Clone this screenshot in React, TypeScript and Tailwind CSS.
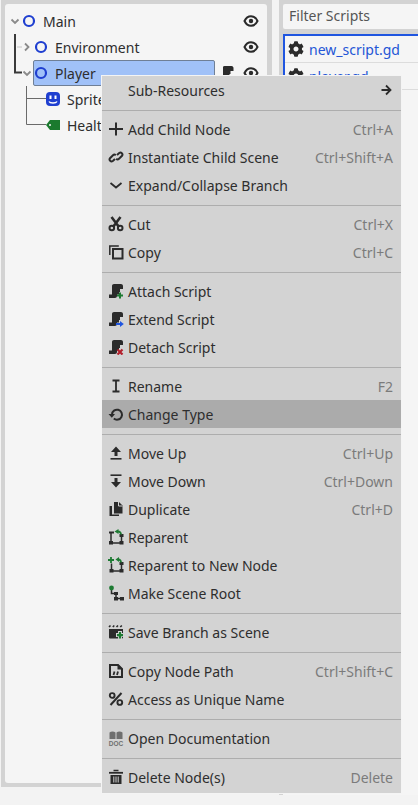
import React from 'react';
import { FaCog } from 'react-icons/fa';

// ── Godot editor icons, drawn on their 16x16 grid ─────────────────────────────
const INK = '#2b2b2b';

const Svg: React.FC<{ children: React.ReactNode; className?: string }> = ({ children, className }) => (
  <svg viewBox="0 0 16 16" className={className ?? 'w-4 h-4 shrink-0'} fill="none">{children}</svg>
);

const Script = ({ fill = INK }: { fill?: string }) => (
  <path
    fill={fill}
    d="M6 1h7c1 0 2 .8 2 2v3h-3v3h-1v2.500H9v1.500c0 1-1 2-2 2H1v-3.500h3V3c0-1.100.9-2 2-2z"
  />
);

const NodeRing = () => (
  <svg viewBox="0 0 16 16" className="w-4 h-4 shrink-0" fill="none">
    <circle cx="8" cy="8" r="5" stroke="#1f3fd0" strokeWidth="2.200" />
  </svg>
);

const Eye = () => (
  <svg viewBox="0 0 16 16" className="w-4 h-4 shrink-0" fill="none">
    <path d="M1.500 8C3 4.800 5 3.200 8 3.200S13 4.800 14.500 8C13 11.200 11 12.800 8 12.800S3 11.200 1.500 8z" stroke={INK} strokeWidth="2" />
    <circle cx="8" cy="8" r="2.200" fill={INK} />
  </svg>
);

const Chevron = ({ right, color = '#8a8a8a' }: { right?: boolean; color?: string }) => (
  <svg viewBox="0 0 12 12" className="w-3 h-3 shrink-0" fill="none">
    <path d={right ? 'M4 2.500 7.500 6 4 9.500' : 'M2.500 4.500 6 8 9.500 4.500'} stroke={color} strokeWidth="1.800" />
  </svg>
);

const icons: Record<string, React.ReactNode> = {
  plus: <Svg><path d="M8 1.500v13M1 8h14" stroke={INK} strokeWidth="2" /></Svg>,
  link: (
    <Svg>
      <g stroke={INK} strokeWidth="2">
        <path d="M7 10 4.800 12a2 2 0 0 1-2.800-2.800L5 6.200a2 2 0 0 1 2.800 0" />
        <path d="M9 6l2.200-2A2 2 0 0 1 14 6.800L11 9.800a2 2 0 0 1-2.800 0" />
      </g>
    </Svg>
  ),
  chevron: <Svg><path d="M2.500 6 8 10.500 13.500 6" stroke={INK} strokeWidth="1.800" /></Svg>,
  cut: (
    <Svg>
      <path d="M3.500 1 11 11M12.500 1 5 11" stroke={INK} strokeWidth="2.600" />
      <circle cx="3.800" cy="12" r="2.300" stroke={INK} strokeWidth="2" />
      <circle cx="12.200" cy="12" r="2.300" stroke={INK} strokeWidth="2" />
    </Svg>
  ),
  copy: (
    <Svg>
      <path d="M1.800 11V2h9" stroke={INK} strokeWidth="1.500" />
      <rect x="5" y="5" width="9.500" height="9.500" stroke={INK} strokeWidth="2" />
    </Svg>
  ),
  attach: (
    <Svg>
      <Script />
      <path d="M12 9.500v6M9 12.500h6" stroke="#1d7a32" strokeWidth="2" />
    </Svg>
  ),
  extend: (
    <Svg>
      <Script />
      <path d="M8 13h5" stroke="#1f55e0" strokeWidth="2" />
      <path d="M12 10l3.800 3-3.800 3z" fill="#1f55e0" />
    </Svg>
  ),
  detach: (
    <Svg>
      <Script />
      <path d="M9.500 10.500l5 5M14.500 10.500l-5 5" stroke="#b3202c" strokeWidth="2.200" />
    </Svg>
  ),
  rename: <Svg><path d="M4.500 2.500h7M4.500 13.500h7M8 2.500v11" stroke={INK} strokeWidth="1.800" /></Svg>,
  change: (
    <Svg>
      <path d="M4 8.500a5 5 0 1 1 1.800 4" stroke={INK} strokeWidth="2" />
      <path d="M.5 8h6.500L3.800 11.800z" fill={INK} />
    </Svg>
  ),
  up: (
    <Svg>
      <path d="M8 1.500 3 7h3.500v4h3V7H13z" fill={INK} />
      <path d="M2.500 13.800h11" stroke={INK} strokeWidth="1.600" />
    </Svg>
  ),
  down: (
    <Svg>
      <path d="M2.500 2.200h11" stroke={INK} strokeWidth="1.600" />
      <path d="M8 14.500 3 9h3.500V5h3v4H13z" fill={INK} />
    </Svg>
  ),
  duplicate: (
    <Svg>
      <path d="M6 1h5l3.500 3.500V12.500H6z" fill={INK} />
      <path d="M10.500 1v4h4" stroke="#d3d3d3" strokeWidth="1" />
      <path d="M1.500 5H4v8.500h7V15H1.500z" fill={INK} />
    </Svg>
  ),
  reparent: (
    <Svg>
      <path d="M3 4v10h10.500V6" stroke={INK} strokeWidth="1.500" />
      <path d="M1 3.500h5" stroke={INK} strokeWidth="2" />
      <g fill={INK}>
        <rect x="1" y="12" width="4" height="3.500" />
        <rect x="11.500" y="12" width="4" height="3.500" />
        <rect x="11.500" y="5" width="4" height="3" />
      </g>
      <path d="M13 5.500c0-1.800-1-3-3-3" stroke="#1d7a32" strokeWidth="1.800" />
      <path d="M10.500 0v5L6.500 2.500z" fill="#1d7a32" />
    </Svg>
  ),
  reparentNew: (
    <Svg>
      <path d="M3.500 6.500V14h10V7" stroke={INK} strokeWidth="1.500" />
      <g fill={INK}>
        <rect x="1.500" y="12" width="4" height="3.500" />
        <rect x="11.500" y="12" width="4" height="3.500" />
        <rect x="11.500" y="5" width="4" height="3" />
      </g>
      <path d="M3 0v6M0 3h6" stroke="#1d7a32" strokeWidth="1.800" />
      <path d="M13 5.500c0-1.800-1-3-2.500-3" stroke="#1d7a32" strokeWidth="1.800" />
      <path d="M11 0v5L7.500 2.500z" fill="#1d7a32" />
    </Svg>
  ),
  root: (
    <Svg>
      <path d="M3.500 3v5.500H8v5h5.500" stroke={INK} strokeWidth="1.500" />
      <circle cx="3.500" cy="3" r="2.400" fill="#1d7a32" />
      <g fill={INK}>
        <rect x="6" y="7" width="4" height="3" />
        <rect x="6" y="12" width="4" height="3.500" />
        <rect x="12" y="12" width="4" height="3.500" />
      </g>
    </Svg>
  ),
  save: (
    <Svg>
      <path d="M1 3l1.500-1.500M4.800 3l1.500-1.500M8.500 3 10 1.500M12.300 3l1.500-1.500" stroke={INK} strokeWidth="1.600" />
      <path d="M1 5h14v8.500a1 1 0 0 1-1 1H2a1 1 0 0 1-1-1z" fill={INK} />
      <path d="M12 7v8M8 11h8" stroke="#d3d3d3" strokeWidth="4" />
      <path d="M12 8v6.500M9 11.200h6" stroke="#1d7a32" strokeWidth="2.200" />
    </Svg>
  ),
  path: (
    <Svg>
      <path d="M2 2h8l4 4v8H2z" stroke={INK} strokeWidth="2" />
      <path d="M9.500 1V6.500H15z" fill={INK} />
      <path d="M5.500 12l1-3.500M9 12l1-3.500" stroke={INK} strokeWidth="1.800" />
    </Svg>
  ),
  percent: (
    <Svg>
      <circle cx="4.200" cy="4.500" r="2.400" stroke={INK} strokeWidth="1.900" />
      <circle cx="11.800" cy="11.500" r="2.400" stroke={INK} strokeWidth="1.900" />
      <path d="M13.500 2 2.500 14" stroke={INK} strokeWidth="2" />
    </Svg>
  ),
  doc: (
    <Svg>
      <path d="M1.500 2.500c1.500-1.200 4.500-1.200 6 0V9h-6zM8.500 2.500c1.500-1.200 4.500-1.200 6 0V9h-6z" fill="#6f6f6f" />
      <text x="8" y="15.500" textAnchor="middle" fontSize="6.500" fontWeight="700" fill="#6f6f6f" fontFamily="'Liberation Sans', sans-serif">DOC</text>
    </Svg>
  ),
  trash: (
    <Svg>
      <path d="M1 3.800h14" stroke={INK} strokeWidth="1.800" />
      <path d="M5.500 1.500h5" stroke={INK} strokeWidth="1.500" />
      <path d="M2.500 6H13.500V15H2.500z" fill={INK} />
      <path d="M5.800 7.500v6M8 7.500v6M10.200 7.500v6" stroke="#d3d3d3" strokeWidth="1" />
    </Svg>
  ),
};

// ── Context menu contents, null is a separator ────────────────────────────────
type Item = { icon?: string; label: string; shortcut?: string; active?: boolean; arrow?: boolean } | null;

const MENU: Item[] = [
  { label: 'Sub-Resources', arrow: true },
  null,
  { icon: 'plus', label: 'Add Child Node', shortcut: 'Ctrl+A' },
  { icon: 'link', label: 'Instantiate Child Scene', shortcut: 'Ctrl+Shift+A' },
  { icon: 'chevron', label: 'Expand/Collapse Branch' },
  null,
  { icon: 'cut', label: 'Cut', shortcut: 'Ctrl+X' },
  { icon: 'copy', label: 'Copy', shortcut: 'Ctrl+C' },
  null,
  { icon: 'attach', label: 'Attach Script' },
  { icon: 'extend', label: 'Extend Script' },
  { icon: 'detach', label: 'Detach Script' },
  null,
  { icon: 'rename', label: 'Rename', shortcut: 'F2' },
  { icon: 'change', label: 'Change Type', active: true },
  null,
  { icon: 'up', label: 'Move Up', shortcut: 'Ctrl+Up' },
  { icon: 'down', label: 'Move Down', shortcut: 'Ctrl+Down' },
  { icon: 'duplicate', label: 'Duplicate', shortcut: 'Ctrl+D' },
  { icon: 'reparent', label: 'Reparent' },
  { icon: 'reparentNew', label: 'Reparent to New Node' },
  { icon: 'root', label: 'Make Scene Root' },
  null,
  { icon: 'save', label: 'Save Branch as Scene' },
  null,
  { icon: 'path', label: 'Copy Node Path', shortcut: 'Ctrl+Shift+C' },
  { icon: 'percent', label: 'Access as Unique Name' },
  null,
  { icon: 'doc', label: 'Open Documentation' },
  null,
  { icon: 'trash', label: 'Delete Node(s)', shortcut: 'Delete' },
];

const ContextMenu = () => (
  <div className="absolute left-[101px] top-[75px] w-[301px] h-[719px] flex flex-col border border-[#f4f4f4] bg-[#d3d3d3] text-[14px] text-[#2e2e2e]">
    {MENU.map((item, i) =>
      item === null ? (
        <div key={i} className="h-[11px] flex items-start pt-[6px] shrink-0">
          <div className="h-px w-full bg-[#adadad]" />
        </div>
      ) : (
        <div
          key={i}
          className={`h-7 shrink-0 flex items-center pl-[6px] pr-2 ${item.active ? 'bg-[#ababab]' : ''}`}
        >
          <span className="w-4 h-4 mr-1 shrink-0">{item.icon ? icons[item.icon] : null}</span>
          <span className="flex-1 whitespace-nowrap">{item.label}</span>
          {item.shortcut && <span className="text-[#7b7b7b] whitespace-nowrap">{item.shortcut}</span>}
          {item.arrow && (
            <svg viewBox="0 0 16 16" className="w-4 h-4 shrink-0" fill="none">
              <path d="M4.500 8h9M9 3.500 13.500 8 9 12.500" stroke={INK} strokeWidth="1.800" />
            </svg>
          )}
        </div>
      ),
    )}
  </div>
);

// ── Scene tree ────────────────────────────────────────────────────────────────
const TreeLines = () => (
  <svg className="absolute left-0 top-0 w-[60px] h-[130px]" viewBox="0 0 60 130" fill="none">
    <path d="M10 30v38.500h7" stroke="#3a3a3a" strokeWidth="2" />
    <path d="M12 43h5" stroke="#c4c4c4" strokeWidth="1" />
    <path d="M21.500 82v38.500H41M21.500 94.500H41" stroke="#6a6a6a" strokeWidth="1" />
  </svg>
);

const SpriteIcon = () => (
  <svg viewBox="0 0 16 16" className="w-4 h-4 shrink-0">
    <rect x="1" y="1" width="14" height="14" rx="4" fill="#1f3fd0" />
    <rect x="4.500" y="4.500" width="2" height="3.500" fill="#fff" />
    <rect x="9.500" y="4.500" width="2" height="3.500" fill="#fff" />
    <path d="M4 10.500c1 2 7 2 8 0" stroke="#fff" strokeWidth="1.400" fill="none" />
  </svg>
);

const TagIcon = () => (
  <svg viewBox="0 0 16 16" className="w-4 h-4 shrink-0">
    <path d="M5 3h10v10H5L1 8z" fill="#1b7a2e" />
    <circle cx="5" cy="8" r="1" fill="#f5f5f5" />
  </svg>
);

const SceneTree = () => (
  <div className="relative flex-1 h-full rounded-[3px] bg-[#f5f5f5] pt-1 text-[14px] text-[#2e2e2e] overflow-hidden">
    <TreeLines />
    <div className="h-[26px] flex items-center pl-[4px]">
      <Chevron />
      <NodeRing />
      <span className="ml-[6px] flex-1">Main</span>
      <span className="mr-2"><Eye /></span>
    </div>
    <div className="h-[26px] flex items-center pl-[16px]">
      <Chevron right />
      <NodeRing />
      <span className="ml-[6px] flex-1">Environment</span>
      <span className="mr-2"><Eye /></span>
    </div>
    <div className="h-[26px] flex items-center pl-[16px]">
      <Chevron />
      <div className="w-[182px] h-[26px] shrink-0 flex items-center rounded-[2px] border border-[#6f7f96] bg-[#a0c1f8]">
        <span className="-ml-px"><NodeRing /></span>
        <span className="ml-[6px]">Player</span>
      </div>
      {/* only the top of the script icon shows above the menu */}
      <span className="ml-[8px] w-3 h-4 flex">
        <svg viewBox="5 0 11 16" className="w-3 h-4"><Script /></svg>
      </span>
      <span className="ml-[8px]"><Eye /></span>
    </div>
    <div className="h-[26px] flex items-center pl-[40px] whitespace-nowrap">
      <SpriteIcon />
      <span className="ml-[6px]">Sprite2D</span>
    </div>
    <div className="h-[26px] flex items-center pl-[40px] whitespace-nowrap">
      <TagIcon />
      <span className="ml-[6px]">HealthBar</span>
    </div>
  </div>
);

// ── Script list on the right ──────────────────────────────────────────────────
const ScriptRow = ({ name }: { name: string }) => (
  <div className="h-[27px] shrink-0 flex items-center gap-[5px] pl-[3px] border-b border-[#dcdcdc] text-[#2456d6]">
    <FaCog className="w-4 h-4 text-[#2b2b2b]" />
    <span>{name}</span>
  </div>
);

const ScriptPanel = () => (
  <div className="w-[139px] h-[795px] shrink-0 flex flex-col gap-[5px] bg-[#d3d3d3] pl-1 pt-1 text-[14px]">
    <div className="h-[25px] shrink-0 flex items-center rounded-l-[2px] bg-[#f5f5f5] pl-[6px] pb-[2px] text-[#555555]">
      Filter Scripts
    </div>
    <div className="flex-1 bg-[#f5f5f5]">
      <div className="border-l-2 border-t-2 border-[#1f55e0]">
        <ScriptRow name="new_script.gd" />
        <ScriptRow name="player.gd" />
      </div>
    </div>
  </div>
);

export default function App() {
  return (
    <div className="relative w-[418px] h-[805px] overflow-hidden bg-[#f3f3f3] font-['Noto_Sans',sans-serif]">
      <div className="flex items-start">
        <div className="ml-px w-[271px] h-[787px] shrink-0 bg-[#d3d3d3] pl-1 pr-[5px] pt-1 pb-1 flex">
          <SceneTree />
        </div>
        <div className="w-[7px] shrink-0" />
        <ScriptPanel />
      </div>
      <ContextMenu />
    </div>
  );
}
